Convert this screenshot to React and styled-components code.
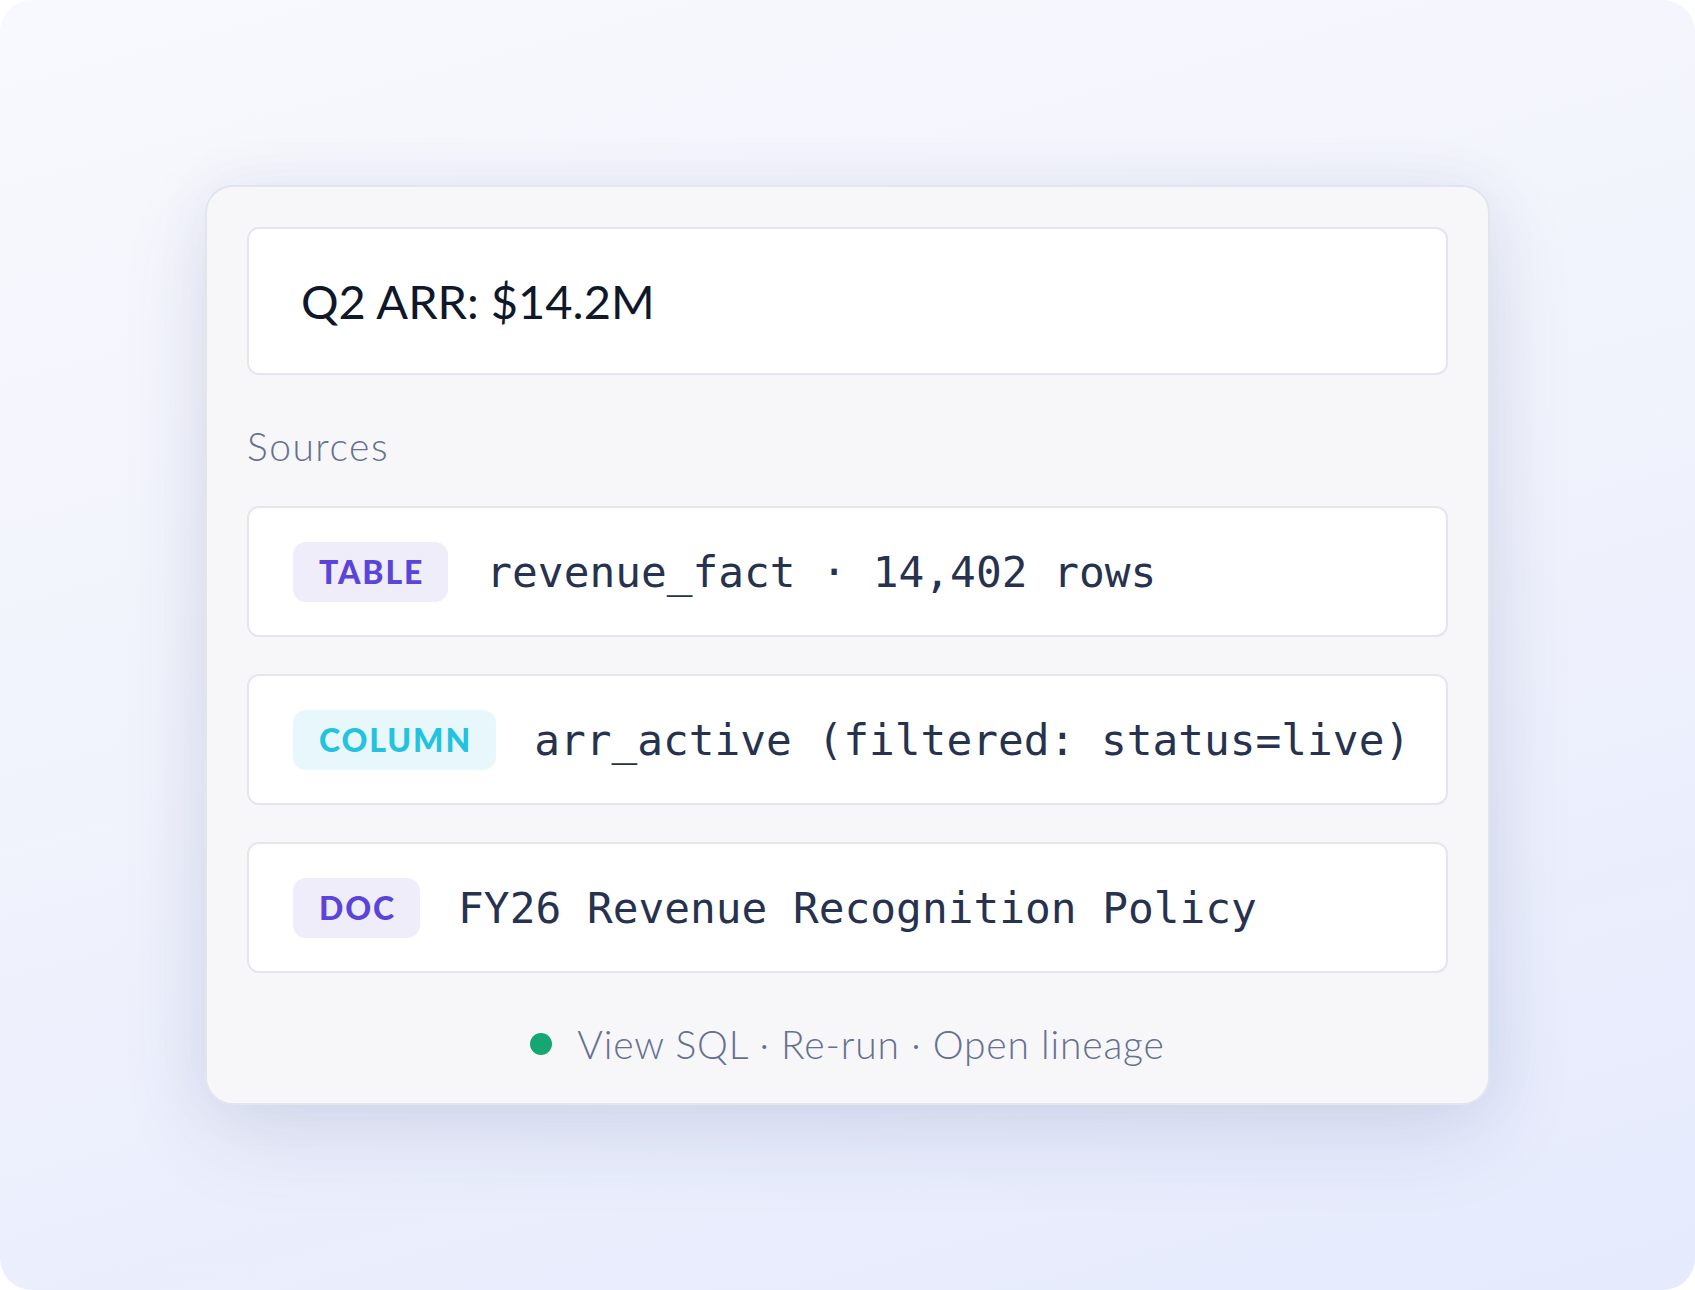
import React from 'react'
import styled, { createGlobalStyle } from 'styled-components'

const GlobalStyle = createGlobalStyle`
  html, body {
    margin: 0;
    padding: 0;
    background: #ffffff;
  }
  * {
    box-sizing: border-box;
  }
`

const Frame = styled.div`
  width: 1695px;
  height: 1290px;
  border-radius: 32px;
  overflow: hidden;
  background: linear-gradient(165deg, #f8f9fe 0%, #f1f3fc 45%, #e5eafd 100%);
  display: flex;
  align-items: center;
  justify-content: center;
`

const Card = styled.div`
  width: 1285px;
  height: 920px;
  border-radius: 28px;
  background: #f7f7fa;
  border: 2px solid #e2e4ee;
  box-shadow: 0 30px 90px rgba(40, 52, 110, 0.11), 0 0 60px rgba(40, 52, 110, 0.05);
  padding: 40px 40px 0;
  display: flex;
  flex-direction: column;
`

const AnswerBox = styled.div`
  height: 148px;
  background: #ffffff;
  border: 2px solid #e5e5ef;
  border-radius: 12px;
  display: flex;
  align-items: center;
  padding: 0 52px;
  font-family: Lato, "Open Sans", sans-serif;
  font-size: 47px;
  font-weight: 400;
  color: #0f172a;
`

const SectionLabel = styled.div`
  margin-top: 46px;
  height: 50px;
  line-height: 50px;
  font-family: Lato, "Open Sans", sans-serif;
  font-size: 39px;
  font-weight: 300;
  letter-spacing: 1.5px;
  color: #66708f;
`

const SourceList = styled.div`
  margin-top: 35px;
  display: flex;
  flex-direction: column;
  gap: 37px;
`

const SourceRow = styled.div`
  height: 131px;
  background: #ffffff;
  border: 2px solid #e5e5ef;
  border-radius: 12px;
  display: flex;
  align-items: center;
  gap: 38px;
  padding: 0 44px;
`

const Badge = styled.span`
  height: 60px;
  padding: 0 24px 0 26px;
  border-radius: 13px;
  display: inline-flex;
  align-items: center;
  font-family: Lato, "Open Sans", sans-serif;
  font-weight: 900;
  font-size: 32px;
  letter-spacing: 1.9px;
  color: ${p => (p.$tone === 'cyan' ? '#22c3de' : '#5b45d8')};
  background: ${p => (p.$tone === 'cyan' ? '#e8f7fc' : '#efedf9')};
`

const Mono = styled.span`
  font-family: "DejaVu Sans Mono", "Liberation Mono", monospace;
  font-size: 42.8px;
  color: #27324f;
  white-space: pre;
`

const Footer = styled.div`
  margin-top: 46px;
  display: flex;
  align-items: center;
  justify-content: center;
  gap: 25px;
  font-family: Lato, "Open Sans", sans-serif;
  font-size: 39px;
  font-weight: 300;
  letter-spacing: 0.8px;
  color: #66708f;
  line-height: 50px;
`

const Dot = styled.span`
  width: 22px;
  height: 22px;
  border-radius: 50%;
  background: #17a673;
`

const sources = [
  { kind: 'TABLE', tone: 'purple', text: 'revenue_fact · 14,402 rows' },
  { kind: 'COLUMN', tone: 'cyan', text: 'arr_active (filtered: status=live)' },
  { kind: 'DOC', tone: 'purple', text: 'FY26 Revenue Recognition Policy' },
]

export default function App() {
  return (
    <>
      <GlobalStyle />
      <Frame>
        <Card>
          <AnswerBox>Q2 ARR: $14.2M</AnswerBox>
          <SectionLabel>Sources</SectionLabel>
          <SourceList>
            {sources.map(s => (
              <SourceRow key={s.kind}>
                <Badge $tone={s.tone}>{s.kind}</Badge>
                <Mono>{s.text}</Mono>
              </SourceRow>
            ))}
          </SourceList>
          <Footer>
            <Dot />
            <span>View SQL · Re-run · Open lineage</span>
          </Footer>
        </Card>
      </Frame>
    </>
  )
}
